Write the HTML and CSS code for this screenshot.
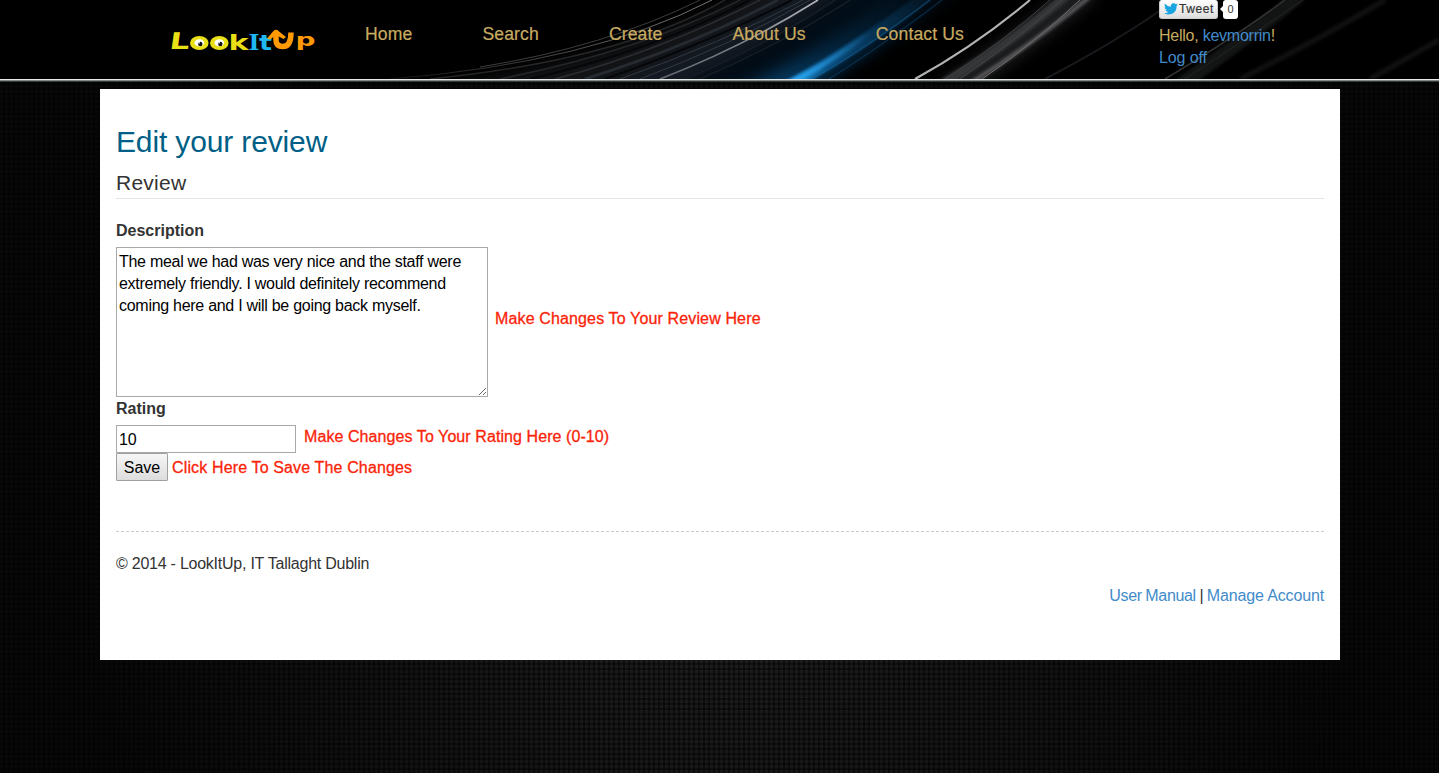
FILE: index.html
```html
<!DOCTYPE html>
<html lang="en">
<head>
<meta charset="utf-8">
<title>Edit - LookItUp</title>
<link rel="stylesheet" href="styles.css">
</head>
<body>
<header class="site-header">
  <svg class="streaks" viewBox="0 0 1439 79" preserveAspectRatio="none" aria-hidden="true">
    <defs>
      <filter id="soft" color-interpolation-filters="sRGB" filterUnits="userSpaceOnUse" x="300" y="-60" width="1139" height="200"><feGaussianBlur stdDeviation="7"/></filter>
      <filter id="fine" color-interpolation-filters="sRGB" filterUnits="userSpaceOnUse" x="300" y="-60" width="1139" height="200"><feGaussianBlur stdDeviation="1.8"/></filter>
      <linearGradient id="blue" gradientUnits="userSpaceOnUse" x1="790" y1="79" x2="925" y2="0"><stop offset="0" stop-color="#1d90d6"/><stop offset=".25" stop-color="#0b5185"/><stop offset=".6" stop-color="#063354"/><stop offset="1" stop-color="#041624"/></linearGradient>
      <linearGradient id="glow" gradientUnits="userSpaceOnUse" x1="780" y1="79" x2="930" y2="0"><stop offset="0" stop-color="#053558"/><stop offset=".5" stop-color="#031e33"/><stop offset="1" stop-color="#020a12"/></linearGradient>
      <linearGradient id="tip" gradientUnits="userSpaceOnUse" x1="790" y1="79" x2="870" y2="32"><stop offset="0" stop-color="#2aa6f0"/><stop offset="1" stop-color="#2aa6f0" stop-opacity="0"/></linearGradient>
      <linearGradient id="fade" x1="0" x2="1"><stop offset="0" stop-color="#777" stop-opacity=".15"/><stop offset="1" stop-color="#777"/></linearGradient>
      <linearGradient id="edge" x1="0" x2="1"><stop offset="0" stop-color="#60646a"/><stop offset=".6" stop-color="#85898e"/><stop offset="1" stop-color="#b5b7ba"/></linearGradient>
    </defs>
    <g fill="none">
      <path d="M460 105Q670 75 810-20" stroke="#131416" stroke-width="44" filter="url(#soft)"/>
      <path d="M600 105Q735 55 840-20" stroke="#141a23" stroke-width="34" filter="url(#soft)"/>
      <path d="M700 105Q810 60 900-20" stroke="#020e19" stroke-width="50" filter="url(#soft)"/>
      <path d="M745 105Q850 55 945-20" stroke="url(#glow)" stroke-width="34" filter="url(#soft)"/>
      <path d="M775 94Q856 50 935-10" stroke="url(#blue)" stroke-width="12" filter="url(#fine)"/>
      <path d="M788 85Q835 59 870 32" stroke="url(#tip)" stroke-width="5" filter="url(#fine)"/>
      <path d="M812 79Q867 48 930 0" stroke="#1668a0" stroke-opacity=".5" stroke-width="1.5"/>
      <path d="M829 79Q882 46 942 0" stroke="#0a3b60" stroke-opacity=".6" stroke-width="1.500"/>
      <path d="M390 79Q590 63 712 0" stroke="url(#fade)" stroke-width="1"/>
      <path d="M480 67Q605 47 700 0" stroke="#4c4c4c" stroke-width=".8"/>
      <path d="M430 79Q620 60 725 0M500 79Q640 51 740 0" stroke="#252628" stroke-width="1.500"/>
      <path d="M555 79Q660 51 760 0" stroke="#2a2d32" stroke-width="1.500"/>
      <path d="M585 79Q690 46 778 0" stroke="#262a31" stroke-width="3"/>
      <path d="M530 79Q655 50 750 0M605 79Q710 42 792 0" stroke="#05070a" stroke-width="2"/>
      <path d="M620 79Q720 44 803 0M640 79Q733 44 810 0" stroke="#343a42" stroke-width="1"/>
      <path d="M660 79Q745 46 818 0" stroke="url(#edge)" stroke-width="1.700"/>
      <path d="M685 79Q765 46 835 0M700 79Q785 42 850 0" stroke="#151d26" stroke-width="1.500"/>
      <path d="M942 96Q1015 48 1090-12" stroke="#1d1e20" stroke-width="24" filter="url(#soft)"/>
      <path d="M944 83Q1004 48 1066-4" stroke="#353638" stroke-width="9" filter="url(#fine)"/>
      <path d="M915 79Q975 46 1030 0" stroke="#b2b3b5" stroke-width="2.200"/>
      <path d="M972 82Q1030 46 1092-5" stroke="#5b5a5c" stroke-width="4" filter="url(#fine)"/>
      <path d="M982 79Q1036 42 1080 0" stroke="#706c6a" stroke-width="1"/>
      <path d="M945 79Q1003 42 1050 0M960 79Q1014 42 1062 0" stroke="#444447" stroke-width="1"/>
      <path d="M1045 79Q1120 40 1175 0" stroke="#17191c" stroke-width="2"/>
      <path d="M1180 85Q1245 40 1300-5" stroke="#131414" stroke-width="14" filter="url(#fine)"/>
      <path d="M1165 79Q1235 37 1285 0" stroke="#323233" stroke-width="1.500"/>
      <path d="M1185 79Q1245 40 1303 0" stroke="#242424" stroke-width="1"/>
      <path d="M1240 79Q1320 39 1385 0M1370 79L1439 40" stroke="#111" stroke-width="5" filter="url(#fine)"/>
    </g>
  </svg>
  <a class="logo" href="#">
    <svg width="150" height="36" viewBox="0 0 150 36" role="img" aria-label="LookItUp">
      <g class="logo-text">
        <text x="1.500" y="26.500" fill="#e8df16" font-size="23" textLength="20" lengthAdjust="spacingAndGlyphs" transform="skewX(-8) translate(3 0)">L</text>
        <text x="60.500" y="26.500" fill="#e8df16" font-size="22" textLength="20" lengthAdjust="spacingAndGlyphs">k</text>
        <text class="flared" x="80.500" y="26.500" fill="#20b8f2" font-size="23" textLength="11" lengthAdjust="spacingAndGlyphs">I</text>
        <text x="91" y="26.500" fill="#20b8f2" font-size="21" textLength="13" lengthAdjust="spacingAndGlyphs">t</text>
        <text x="127.500" y="23" fill="#ff9a05" font-size="18" textLength="20" lengthAdjust="spacingAndGlyphs">p</text>
      </g>
      <g fill="#e8df16"><ellipse cx="31.300" cy="20" rx="9.300" ry="7"/><ellipse cx="51.300" cy="20" rx="9.300" ry="7"/></g>
      <g fill="#fff"><ellipse cx="31.300" cy="19.800" rx="4.800" ry="3.600"/><ellipse cx="51.300" cy="19.800" rx="4.800" ry="3.600"/></g>
      <g fill="#111"><circle cx="32.300" cy="21" r="2.200"/><circle cx="52.300" cy="21" r="2.200"/></g>
      <g fill="#fff"><circle cx="31.200" cy="19.800" r=".8"/><circle cx="51.200" cy="19.800" r=".8"/></g>
      <path d="M108 10V17Q108 23.500 115 23.500Q123 23.500 123 9.500" fill="none" stroke="#ff9a05" stroke-width="5.500"/>
      <path d="M99 15.500L105.500 8Q108 5.500 110.500 8L118 14L115.500 16L108 12L102 16.500Z" fill="#ff9a05"/>
    </svg>
  </a>
  <nav class="nav"><a href="#">Home</a><a href="#">Search</a><a href="#">Create</a><a href="#">About Us</a><a href="#">Contact Us</a></nav>
  <div class="account">
    <div class="share">
      <span class="tweet"><svg width="14" height="12" viewBox="0 0 24 20" aria-hidden="true"><path fill="#1ba5e0" d="M24 2.400q-1.200 1.700-2.500 2.500Q22 14 14 18.200Q7 21.300 0 17.300q4 .3 7.200-2.200-3.600-.5-4.600-3.400 1.200.2 2.200-.1Q.9 10.300.9 6.700q1 .6 2.200.6Q-.2 4.300 1.700.8q4 4.900 10.100 5.200Q11.200 1.300 15 .2q3.500-.7 5.200 1.500 1.600-.4 3.100-1.200-.5 1.800-2.200 2.700 1.500-.2 2.900-.8z"/></svg>Tweet</span>
      <span class="count">0</span>
    </div>
    <div class="hello">Hello, <a href="#">kevmorrin</a>!</div>
    <a class="logoff" href="#">Log off</a>
  </div>
</header>
<main class="content">
  <h1>Edit your review</h1>
  <form>
    <h2>Review</h2>
    <label for="description">Description</label>
    <div class="row">
      <textarea id="description">The meal we had was very nice and the staff were
extremely friendly. I would definitely recommend
coming here and I will be going back myself.</textarea>
      <span class="note note-review">Make Changes To Your Review Here</span>
    </div>
    <label class="rating-label" for="rating">Rating</label>
    <div class="row rating-row">
      <input id="rating" type="text" value="10">
      <span class="note note-rating">Make Changes To Your Rating Here (0-10)</span>
    </div>
    <div class="row">
      <button type="button">Save</button>
      <span class="note note-save">Click Here To Save The Changes</span>
    </div>
  </form>
  <footer>
    <p class="copyright">© 2014 - LookItUp, IT Tallaght Dublin</p>
    <p class="links"><a href="#">User Manual</a> | <a class="manage" href="#">Manage Account</a></p>
  </footer>
</main>
</body>
</html>
```
FILE: styles.css
```css
* { box-sizing: border-box; }
body {
  margin: 0;
  min-height: 773px;
  overflow: hidden;
  font: 16px/22px "Liberation Sans", Arial, sans-serif;
  color: #333;
  background:
    radial-gradient(ellipse 640px 600px at 720px 560px, transparent 0, rgba(0,0,0,.76) 100%),
    repeating-linear-gradient(90deg, transparent 0 3px, rgba(0,0,0,.45) 3px 5px),
    repeating-linear-gradient(0deg, #202020 0 3px, #131313 3px 5px);
}
a { color: #428bca; text-decoration: none; }
.site-header {
  position: relative;
  display: flex;
  height: 82px;
  background: #000;
  border-bottom: 1px solid #343838;
  box-shadow: inset 0 -1px #858989, inset 0 -2px #e5e9e9;
}
.streaks { position: absolute; top: 0; left: 0; width: 100%; height: 79px; }
.logo { position: relative; margin: 23px 0 0 168px; width: 150px; height: 36px; }
.logo svg { display: block; }
.logo-text { font-family: "DejaVu Sans", sans-serif; font-weight: bold; }
.flared { font-family: "DejaVu Serif", serif; }
.nav { position: relative; display: flex; gap: 70px; margin: 23px 0 0 47px; font-size: 17.6px; letter-spacing: .12px; }
.nav a { color: #c8ab61; -webkit-text-stroke: .2px #c8ab61; white-space: nowrap; }
.account { position: absolute; left: 1159px; top: 0; color: #c8ab61; letter-spacing: -.24px; }
.share { display: flex; gap: 5px; height: 25px; font-size: 11px; }
.tweet, .count { height: 19px; border-radius: 3px; color: #333; line-height: 18px; }
.tweet { display: flex; align-items: center; gap: 1px; width: 59px; padding-left: 4px; font-size: 12px; -webkit-text-stroke: .2px #333; letter-spacing: .55px; background: linear-gradient(#fff, #dedede); border: 1px solid #ccc; border-top: 0; }
.count { position: relative; width: 15px; text-align: center; background: #fff; }
.count::before { content: ""; position: absolute; left: -3px; top: 6px; border: 3px solid transparent; border-left: 0; border-right-color: #fff; }
.logoff { display: block; letter-spacing: -.1px; }
.content { width: 1240px; height: 571px; margin: 7px auto 0 100px; padding: 35px 16px 0; background: #fff; }
h1 { margin: 0; font-size: 30px; font-weight: 400; line-height: 36px; color: #005f86; letter-spacing: -.14px; }
h2 { margin: 10px 0 20px; height: 29px; border-bottom: 1px solid #e5e5e5; font-size: 21px; font-weight: 400; line-height: 26px; letter-spacing: .25px; }
label { display: block; height: 28px; line-height: 23px; font-weight: 700; }
.row { display: flex; }
textarea, input { margin: 0; border: 1px solid #a9a9a9; border-radius: 0; color: #000; font: inherit; background: #fff; }
textarea { width: 372px; height: 150px; padding: 3px 2px 2px; overflow: hidden; white-space: pre; letter-spacing: -.28px; }
input { width: 180px; height: 28px; padding: 2px 2px 0; letter-spacing: -.2px; }
button { width: 52px; height: 28px; padding: 1px 0 0; border: 1px solid #a0a0a0; border-radius: 1px; color: #000; font: inherit; background: linear-gradient(#f6f6f6, #ddd); }
.note { color: #fa2409; -webkit-text-stroke: .3px #fa2409; white-space: nowrap; letter-spacing: .14px; }
.note-review { margin: 61px 0 0 7px; }
.note-rating { margin: 1px 0 0 8px; letter-spacing: .08px; }
.note-save { margin: 4px 0 0 4px; }
footer { margin-top: 50px; border-top: 1px dashed #ccc; }
p { margin: 0; }
.copyright { padding-top: 21px; letter-spacing: -.24px; }
.links { margin-top: 10px; text-align: right; letter-spacing: -.32px; word-spacing: -.6px; }
.manage { letter-spacing: -.14px; word-spacing: 0; }
```
